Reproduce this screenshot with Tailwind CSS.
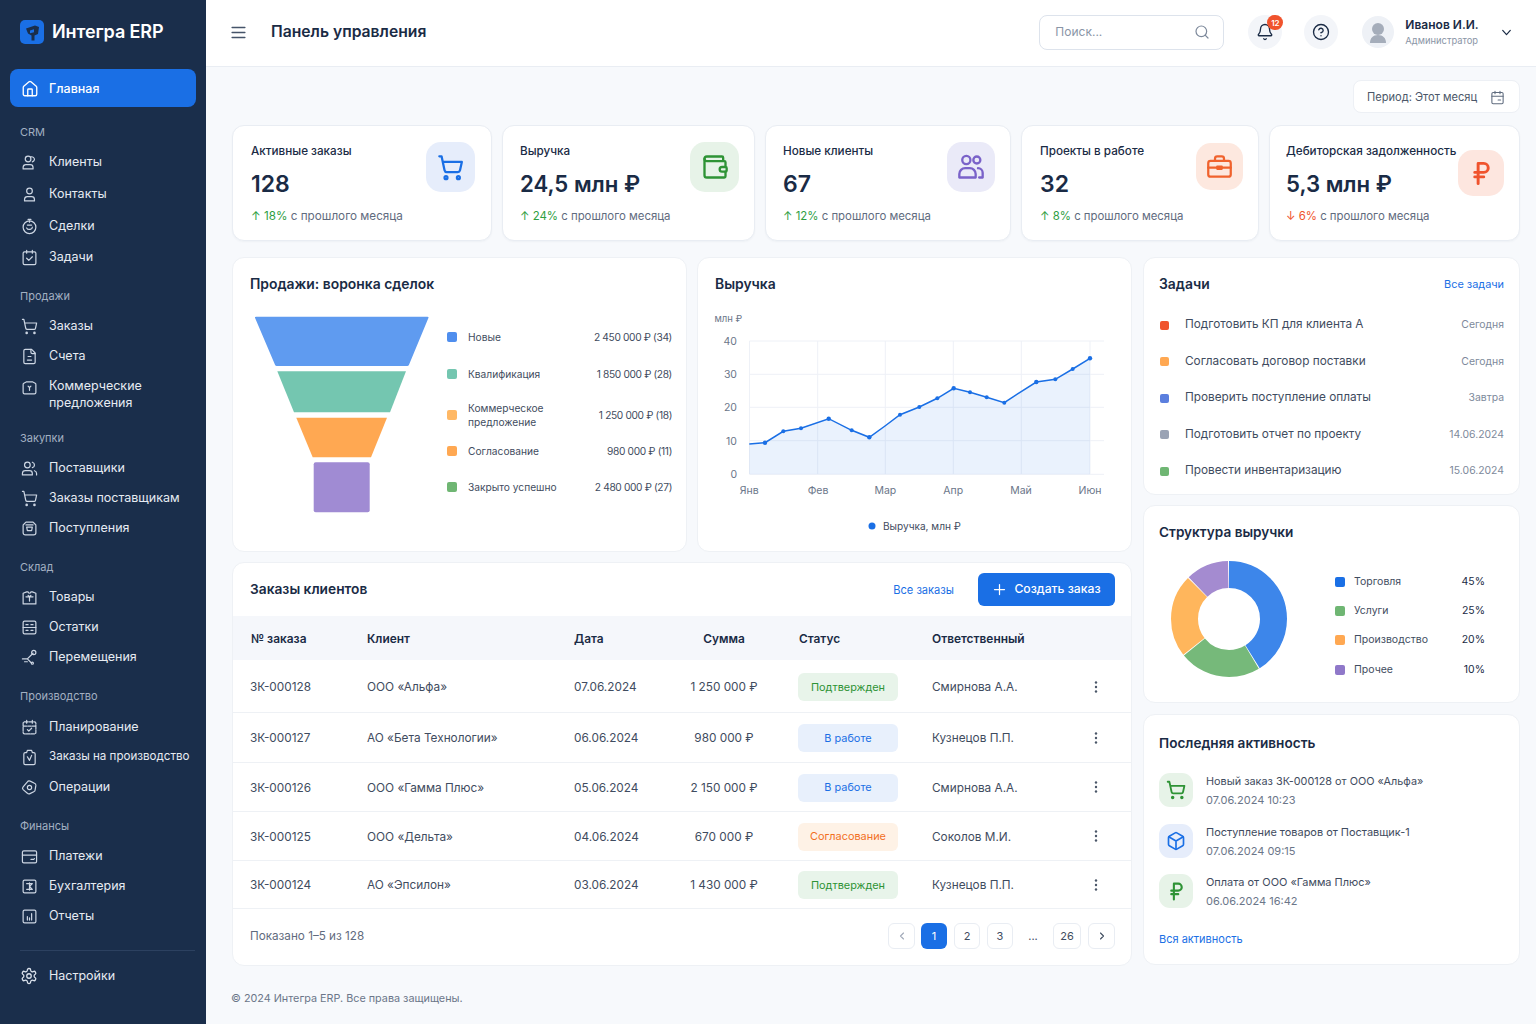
<!DOCTYPE html>
<html lang="ru">
<head>
  <meta charset="UTF-8" />
  <title>Интегра ERP</title>
  <script src="https://cdn.jsdelivr.net/npm/@tailwindcss/browser@4"></script>
</head>
<body class="bg-[#f7f9fc] text-[#1a2b45] font-['Inter','Noto_Sans',sans-serif]">
<div class="flex w-[1536px] h-[1024px] overflow-hidden">

  <!-- Sidebar -->
  <aside class="w-[206px] shrink-0 bg-[#1a2e4b] text-[#e6ebf2] text-[12.5px] whitespace-nowrap">
    <div class="h-[69px] flex items-start pl-[20px] pt-[20px] gap-[8px]">
      <svg class="w-[24px] h-[24px]" viewBox="0 0 24 24"><rect width="24" height="24" rx="5" fill="#1a6fe5"/><path d="M6 8.5l9-3 4 1.500-1 7-3.500 1.500v5h-3v-5l-3.500-2z" fill="#1a2e4b"/><path d="M10 10.5l4-1.200v3l-4 1z" fill="#1a6fe5"/></svg>
      <span class="text-[18px] leading-[24px] font-semibold text-white tracking-[-0.1px]">Интегра ERP</span>
    </div>

    <div class="mx-[10px] h-[38px] pt-[2px] rounded-lg bg-[#1a6fe5] flex items-center pl-[11px] gap-[10px] text-white font-medium">
      <svg class="w-[18px] h-[18px]" fill="none" stroke="currentColor" stroke-width="1.8" stroke-linecap="round" stroke-linejoin="round" viewBox="0 0 24 24"><path d="M15 21v-8a1 1 0 0 0-1-1h-4a1 1 0 0 0-1 1v8"/><path d="M3 10a2 2 0 0 1 .709-1.528l7-5.999a2 2 0 0 1 2.582 0l7 5.999A2 2 0 0 1 21 10v9a2 2 0 0 1-2 2H5a2 2 0 0 1-2-2z"/></svg>
      Главная
    </div>

    <!-- CRM -->
    <div class="mt-[17px] mb-[6px] h-4 pl-[20px] text-[11px] leading-4 text-[#a3b0c2]">CRM</div>
    <div class="h-[32px] flex items-center pl-[21px] gap-[11px]">
      <svg class="w-[17px] h-[17px] text-[#cdd6e3]" fill="none" stroke="currentColor" stroke-width="1.7" stroke-linecap="round" stroke-linejoin="round" viewBox="0 0 24 24"><path d="M17 21v-2a4 4 0 0 0-4-4H7a4 4 0 0 0-4 4v2h14"/><circle cx="10" cy="7" r="4"/><path d="M14 4a4 4 0 0 1 5 4 4 4 0 0 1-3 3"/></svg>
      Клиенты
    </div>
    <div class="h-[32px] flex items-center pl-[21px] gap-[11px]">
      <svg class="w-[17px] h-[17px] text-[#cdd6e3]" fill="none" stroke="currentColor" stroke-width="1.7" stroke-linecap="round" stroke-linejoin="round" viewBox="0 0 24 24"><path d="M19 21v-2a4 4 0 0 0-4-4H9a4 4 0 0 0-4 4v2z"/><circle cx="12" cy="7" r="4"/></svg>
      Контакты
    </div>
    <div class="h-[32px] flex items-center pl-[21px] gap-[11px]">
      <svg class="w-[17px] h-[17px] text-[#cdd6e3]" fill="none" stroke="currentColor" stroke-width="1.7" stroke-linecap="round" stroke-linejoin="round" viewBox="0 0 24 24"><circle cx="12" cy="13" r="9"/><path d="M10 2h4M12 4v2M8 14c1 2 3 2.5 5 2s3-2 3-3M9 10h6"/></svg>
      Сделки
    </div>
    <div class="h-[31px] flex items-center pl-[21px] gap-[11px]">
      <svg class="w-[17px] h-[17px] text-[#cdd6e3]" fill="none" stroke="currentColor" stroke-width="1.7" stroke-linecap="round" stroke-linejoin="round" viewBox="0 0 24 24"><rect x="3" y="4" width="18" height="18" rx="2"/><path d="M8 2v4M16 2v4M8 13l3 3 5-5"/></svg>
      Задачи
    </div>

    <!-- Продажи -->
    <div class="mt-[15px] mb-[7px] h-4 pl-[20px] text-[11px] leading-4 text-[#a3b0c2]">Продажи</div>
    <div class="h-[30px] flex items-center pl-[21px] gap-[11px]">
      <svg class="w-[17px] h-[17px] text-[#cdd6e3]" fill="none" stroke="currentColor" stroke-width="1.7" stroke-linecap="round" stroke-linejoin="round" viewBox="0 0 24 24"><circle cx="8" cy="21" r="1"/><circle cx="19" cy="21" r="1"/><path d="M2.05 2.05h2l2.66 12.42a2 2 0 0 0 2 1.58h9.78a2 2 0 0 0 1.95-1.57l1.65-7.43H5.12"/></svg>
      Заказы
    </div>
    <div class="h-[30px] flex items-center pl-[21px] gap-[11px]">
      <svg class="w-[17px] h-[17px] text-[#cdd6e3]" fill="none" stroke="currentColor" stroke-width="1.7" stroke-linecap="round" stroke-linejoin="round" viewBox="0 0 24 24"><path d="M15 2H6a2 2 0 0 0-2 2v16a2 2 0 0 0 2 2h12a2 2 0 0 0 2-2V7Z"/><path d="M14 2v4a2 2 0 0 0 2 2h4"/><path d="M10 12h4M9 17h6"/></svg>
      Счета
    </div>
    <div class="h-[47px] flex items-start pt-[6px] pl-[21px] gap-[11px] leading-[17px]">
      <svg class="w-[17px] h-[17px] mt-[2px] shrink-0 text-[#cdd6e3]" fill="none" stroke="currentColor" stroke-width="1.7" stroke-linecap="round" stroke-linejoin="round" viewBox="0 0 24 24"><path d="M8 4h8l4 2a2 2 0 0 1 1 2v11a2 2 0 0 1-2 2H5a2 2 0 0 1-2-2V8a2 2 0 0 1 1-2z"/><path d="M10 10l2 2 2-2M12 12v4"/></svg>
      <span>Коммерческие<br>предложения</span>
    </div>

    <!-- Закупки -->
    <div class="mt-[12px] mb-[7px] h-4 pl-[20px] text-[11px] leading-4 text-[#a3b0c2]">Закупки</div>
    <div class="h-[30px] flex items-center pl-[21px] gap-[11px]">
      <svg class="w-[17px] h-[17px] text-[#cdd6e3]" fill="none" stroke="currentColor" stroke-width="1.7" stroke-linecap="round" stroke-linejoin="round" viewBox="0 0 24 24"><path d="M16 21v-2a4 4 0 0 0-4-4H6a4 4 0 0 0-4 4v2z"/><circle cx="9" cy="7" r="4"/><path d="M22 21v-2a4 4 0 0 0-3-3.87M16 3.13a4 4 0 0 1 0 7.75"/></svg>
      Поставщики
    </div>
    <div class="h-[30px] flex items-center pl-[21px] gap-[11px]">
      <svg class="w-[17px] h-[17px] text-[#cdd6e3]" fill="none" stroke="currentColor" stroke-width="1.7" stroke-linecap="round" stroke-linejoin="round" viewBox="0 0 24 24"><circle cx="8" cy="21" r="1"/><circle cx="19" cy="21" r="1"/><path d="M2.05 2.05h2l2.66 12.42a2 2 0 0 0 2 1.58h9.78a2 2 0 0 0 1.95-1.57l1.65-7.43H5.12"/></svg>
      Заказы поставщикам
    </div>
    <div class="h-[30px] flex items-center pl-[21px] gap-[11px]">
      <svg class="w-[17px] h-[17px] text-[#cdd6e3]" fill="none" stroke="currentColor" stroke-width="1.7" stroke-linecap="round" stroke-linejoin="round" viewBox="0 0 24 24"><path d="M7 3h10l3 3a2 2 0 0 1 1 2v10a3 3 0 0 1-3 3H6a3 3 0 0 1-3-3V8a2 2 0 0 1 1-2z"/><path d="M8 10h8l-1 5H9zM7 7h10"/></svg>
      Поступления
    </div>

    <!-- Склад -->
    <div class="mt-[16px] mb-[7px] h-4 pl-[20px] text-[11px] leading-4 text-[#a3b0c2]">Склад</div>
    <div class="h-[30px] flex items-center pl-[21px] gap-[11px]">
      <svg class="w-[17px] h-[17px] text-[#cdd6e3]" fill="none" stroke="currentColor" stroke-width="1.7" stroke-linecap="round" stroke-linejoin="round" viewBox="0 0 24 24"><path d="M8 4h2a2 2 0 0 0 4 0h2l5 2v15H3V6z"/><path d="M7 11h10M12 11v6M10 9l2 2 2-2"/></svg>
      Товары
    </div>
    <div class="h-[30px] flex items-center pl-[21px] gap-[11px]">
      <svg class="w-[17px] h-[17px] text-[#cdd6e3]" fill="none" stroke="currentColor" stroke-width="1.7" stroke-linecap="round" stroke-linejoin="round" viewBox="0 0 24 24"><rect x="3" y="3" width="18" height="18" rx="2"/><path d="M3 12h18M7 8h3M14 8h3M7 16h3M14 16h3"/></svg>
      Остатки
    </div>
    <div class="h-[30px] flex items-center pl-[21px] gap-[11px]">
      <svg class="w-[17px] h-[17px] text-[#cdd6e3]" fill="none" stroke="currentColor" stroke-width="1.7" stroke-linecap="round" stroke-linejoin="round" viewBox="0 0 24 24"><path d="M2 14h7l8-8M9 14l5 5M5 18h4"/><circle cx="18" cy="5" r="3"/><circle cx="16" cy="20" r="1.5"/></svg>
      Перемещения
    </div>

    <!-- Производство -->
    <div class="mt-[16px] mb-[8px] h-4 pl-[20px] text-[11px] leading-4 text-[#a3b0c2]">Производство</div>
    <div class="h-[30px] flex items-center pl-[21px] gap-[11px]">
      <svg class="w-[17px] h-[17px] text-[#cdd6e3]" fill="none" stroke="currentColor" stroke-width="1.7" stroke-linecap="round" stroke-linejoin="round" viewBox="0 0 24 24"><path d="M8 2v4M16 2v4M5 4h14a2 2 0 0 1 2 2v13a2 2 0 0 1-2 2H5a2 2 0 0 1-2-2V6a2 2 0 0 1 2-2zM3 10h18M9 15l2 2 4-4" stroke-dasharray="5 1.5"/></svg>
      Планирование
    </div>
    <div class="h-[30px] flex items-center pl-[21px] gap-[11px] text-[11.6px]">
      <svg class="w-[17px] h-[17px] text-[#cdd6e3]" fill="none" stroke="currentColor" stroke-width="1.7" stroke-linecap="round" stroke-linejoin="round" viewBox="0 0 24 24"><path d="M9 2h6l1 3h2a2 2 0 0 1 2 2v13a2 2 0 0 1-2 2H6a2 2 0 0 1-2-2V7a2 2 0 0 1 2-2h2z"/><path d="M9 11l3 5 3-7"/></svg>
      Заказы на производство
    </div>
    <div class="h-[30px] flex items-center pl-[21px] gap-[11px]">
      <svg class="w-[17px] h-[17px] text-[#cdd6e3]" fill="none" stroke="currentColor" stroke-width="1.7" stroke-linecap="round" stroke-linejoin="round" viewBox="0 0 24 24"><path d="M13 3l6 3a3 3 0 0 1 2 3l-1 6a3 3 0 0 1-2 3l-6 3a3 3 0 0 1-3-1l-6-5a3 3 0 0 1 0-4l6-7a3 3 0 0 1 4-1z"/><circle cx="12" cy="12" r="3"/></svg>
      Операции
    </div>

    <!-- Финансы -->
    <div class="mt-[16px] mb-[7px] h-4 pl-[20px] text-[11px] leading-4 text-[#a3b0c2]">Финансы</div>
    <div class="h-[30px] flex items-center pl-[21px] gap-[11px]">
      <svg class="w-[17px] h-[17px] text-[#cdd6e3]" fill="none" stroke="currentColor" stroke-width="1.7" stroke-linecap="round" stroke-linejoin="round" viewBox="0 0 24 24"><rect x="2" y="4" width="20" height="17" rx="2"/><path d="M2 10h20M14 16h4l1-1"/></svg>
      Платежи
    </div>
    <div class="h-[30px] flex items-center pl-[21px] gap-[11px]">
      <svg class="w-[17px] h-[17px] text-[#cdd6e3]" fill="none" stroke="currentColor" stroke-width="1.7" stroke-linecap="round" stroke-linejoin="round" viewBox="0 0 24 24"><rect x="3" y="3" width="18" height="18" rx="2"/><path d="M8 8h8l-4 4 4 4H8M12 7v10"/></svg>
      Бухгалтерия
    </div>
    <div class="h-[30px] flex items-center pl-[21px] gap-[11px]">
      <svg class="w-[17px] h-[17px] text-[#cdd6e3]" fill="none" stroke="currentColor" stroke-width="1.7" stroke-linecap="round" stroke-linejoin="round" viewBox="0 0 24 24"><rect x="3" y="3" width="18" height="18" rx="2"/><path d="M9 17v-5M15 17V8M12 17v-3"/></svg>
      Отчеты
    </div>

    <div class="mt-[19px] ml-[20px] mr-[11px] h-px bg-[#2c4160]"></div>
    <div class="mt-[10px] h-[30px] flex items-center pl-[20px] gap-[11px]">
      <svg class="w-[18px] h-[18px] text-[#dbe2ec]" fill="none" stroke="currentColor" stroke-width="1.7" stroke-linecap="round" stroke-linejoin="round" viewBox="0 0 24 24"><path d="M12.22 2h-.44a2 2 0 0 0-2 2v.18a2 2 0 0 1-1 1.73l-.43.25a2 2 0 0 1-2 0l-.15-.08a2 2 0 0 0-2.73.73l-.22.38a2 2 0 0 0 .73 2.73l.15.1a2 2 0 0 1 1 1.72v.51a2 2 0 0 1-1 1.74l-.15.09a2 2 0 0 0-.73 2.73l.22.38a2 2 0 0 0 2.73.73l.15-.08a2 2 0 0 1 2 0l.43.25a2 2 0 0 1 1 1.73V20a2 2 0 0 0 2 2h.44a2 2 0 0 0 2-2v-.18a2 2 0 0 1 1-1.73l.43-.25a2 2 0 0 1 2 0l.15.08a2 2 0 0 0 2.73-.73l.22-.39a2 2 0 0 0-.73-2.73l-.15-.08a2 2 0 0 1-1-1.74v-.5a2 2 0 0 1 1-1.74l.15-.09a2 2 0 0 0 .73-2.73l-.22-.38a2 2 0 0 0-2.73-.73l-.15.08a2 2 0 0 1-2 0l-.43-.25a2 2 0 0 1-1-1.73V4a2 2 0 0 0-2-2z"/><circle cx="12" cy="12" r="3"/></svg>
      Настройки
    </div>
  </aside>

  <div class="flex-1 min-w-0">
    <!-- Top bar -->
    <header class="h-[67px] pb-[2px] bg-white border-b border-[#e9edf3] flex items-center">
      <svg class="ml-[24px] w-[17px] h-[17px] text-[#46546a]" fill="none" stroke="currentColor" stroke-width="2" stroke-linecap="round" viewBox="0 0 24 24"><path d="M3 5h18M3 12h18M3 19h18"/></svg>
      <h1 class="ml-[24px] text-[15.7px] font-semibold text-[#1a2b45]">Панель управления</h1>

      <div class="ml-[613px] w-[185px] h-[35px] border border-[#dde3ec] rounded-lg flex items-center justify-between pl-[15px] pr-[13px] text-[12px] text-[#8a95a6]">
        Поиск...
        <svg class="w-[16px] h-[16px] text-[#7d899b]" fill="none" stroke="currentColor" stroke-width="1.8" stroke-linecap="round" viewBox="0 0 24 24"><circle cx="11" cy="11" r="8"/><path d="m21 21-4.3-4.3"/></svg>
      </div>

      <div class="relative ml-[24px] w-[34px] h-[34px] rounded-full bg-[#f3f5f9] flex items-center justify-center">
        <svg class="w-[18px] h-[18px] text-[#1a2b45]" fill="none" stroke="currentColor" stroke-width="1.8" stroke-linecap="round" stroke-linejoin="round" viewBox="0 0 24 24"><path d="M10.268 21a2 2 0 0 0 3.464 0"/><path d="M3.262 15.326A1 1 0 0 0 4 17h16a1 1 0 0 0 .74-1.673C19.41 13.956 18 12.499 18 8A6 6 0 0 0 6 8c0 4.499-1.411 5.956-2.738 7.326"/></svg>
        <span class="absolute top-0 left-[19px] w-[16px] h-[15px] rounded-full bg-[#f0532d] text-white text-[8px] font-semibold flex items-center justify-center">12</span>
      </div>
      <div class="ml-[22px] w-[34px] h-[34px] rounded-full bg-[#f3f5f9] flex items-center justify-center">
        <svg class="w-[18px] h-[18px] text-[#1a2b45]" fill="none" stroke="currentColor" stroke-width="1.8" stroke-linecap="round" stroke-linejoin="round" viewBox="0 0 24 24"><circle cx="12" cy="12" r="10"/><path d="M9.09 9a3 3 0 0 1 5.83 1c0 2-3 3-3 3M12 17h.01"/></svg>
      </div>

      <div class="ml-[24px] w-[32px] h-[32px] rounded-full bg-[#eef1f6] overflow-hidden flex items-center justify-center">
        <svg class="w-[32px] h-[32px]" viewBox="0 0 32 32"><circle cx="16" cy="13" r="6" fill="#a5adba"/><path d="M8 27c0-5 3-8 8-8s8 3 8 8z" fill="#a5adba"/></svg>
      </div>
      <div class="ml-[11px] w-[95px]">
        <div class="text-[12px] leading-[16px] font-semibold text-[#1a2b45]">Иванов И.И.</div>
        <div class="mt-[2px] text-[9.4px] leading-[12px] text-[#8a95a6]">Администратор</div>
      </div>
      <svg class="w-[13px] h-[13px] text-[#1a2b45]" fill="none" stroke="currentColor" stroke-width="2.2" stroke-linecap="round" stroke-linejoin="round" viewBox="0 0 24 24"><path d="m5 8 7 8 7-8"/></svg>
    </header>

    <main class="pl-[26px] pr-[16px]">
      <!-- Period -->
      <div class="pt-[13px] flex justify-end">
        <div class="w-[167px] h-[33px] pt-px bg-white border border-[#edf0f5] rounded-lg flex items-center justify-between pl-[13px] pr-[14px] text-[11.1px] text-[#4b5769]">
          Период: Этот месяц
          <svg class="w-[15px] h-[15px] text-[#5f6b7e]" fill="none" stroke="currentColor" stroke-width="1.7" stroke-linecap="round" stroke-linejoin="round" viewBox="0 0 24 24"><rect x="3" y="4" width="18" height="18" rx="2"/><path d="M8 2v4M16 2v4M3 10h18M13 16h4"/></svg>
        </div>
      </div>

      <!-- KPI cards -->
      <div class="mt-[12px] flex gap-[10px] h-[116px]">
        <div class="w-[260px] shrink-0 bg-white border border-[#e9edf3] rounded-xl shadow-[0_1px_2px_rgba(26,43,69,0.04)] flex justify-between pl-[18px] pr-[16px] pt-[16px]">
          <div class="mt-px">
            <div class="text-[11.7px] leading-4 font-medium text-[#1a2b45]">Активные заказы</div>
            <div class="mt-[9px] text-[23px] leading-8 font-semibold">128</div>
            <div class="mt-[8px] text-[11.7px] leading-4 text-[#5f6b7e]"><span class="text-[#2e9e3f]">↑ 18%</span> с прошлого месяца</div>
          </div>
          <div class="w-[49px] h-[50px] rounded-[15px] bg-[#e6edfb] flex items-center justify-center">
            <svg class="w-[27px] h-[27px] text-[#1a6fe5]" fill="none" stroke="currentColor" stroke-width="2" stroke-linecap="round" stroke-linejoin="round" viewBox="0 0 24 24"><circle cx="8" cy="21" r="1.3"/><circle cx="19" cy="21" r="1.3"/><path d="M2.05 2.05h2l2.66 12.42a2 2 0 0 0 2 1.58h9.78a2 2 0 0 0 1.95-1.57l1.65-7.43H5.12"/></svg>
          </div>
        </div>
        <div class="w-[253px] shrink-0 bg-white border border-[#e9edf3] rounded-xl shadow-[0_1px_2px_rgba(26,43,69,0.04)] flex justify-between pl-[17px] pr-[15px] pt-[16px]">
          <div class="mt-px">
            <div class="text-[11.7px] leading-4 font-medium text-[#1a2b45]">Выручка</div>
            <div class="mt-[9px] text-[22.2px] leading-8 font-semibold">24,5 млн ₽</div>
            <div class="mt-[8px] text-[11.4px] leading-4 text-[#5f6b7e]"><span class="text-[#2e9e3f]">↑ 24%</span> с прошлого месяца</div>
          </div>
          <div class="w-[49px] h-[50px] rounded-[15px] bg-[#e7f3e8] flex items-center justify-center">
            <svg class="w-[28px] h-[28px] text-[#2e9335]" fill="none" stroke="currentColor" stroke-width="2" stroke-linecap="round" stroke-linejoin="round" viewBox="0 0 24 24"><path d="M19 7V4a1 1 0 0 0-1-1H5a2 2 0 0 0 0 4h15a1 1 0 0 1 1 1v4h-3a2 2 0 0 0 0 4h3a1 1 0 0 0 1-1v-2a1 1 0 0 0-1-1"/><path d="M3 5v14a2 2 0 0 0 2 2h15a1 1 0 0 0 1-1v-4"/></svg>
          </div>
        </div>
        <div class="w-[246px] shrink-0 bg-white border border-[#e9edf3] rounded-xl shadow-[0_1px_2px_rgba(26,43,69,0.04)] flex justify-between pl-[17px] pr-[15px] pt-[16px]">
          <div class="mt-px">
            <div class="text-[11.7px] leading-4 font-medium text-[#1a2b45]">Новые клиенты</div>
            <div class="mt-[9px] text-[23px] leading-8 font-semibold">67</div>
            <div class="mt-[8px] text-[11.4px] leading-4 text-[#5f6b7e]"><span class="text-[#2e9e3f]">↑ 12%</span> с прошлого месяца</div>
          </div>
          <div class="w-[48px] h-[50px] rounded-[15px] bg-[#eaeaf8] flex items-center justify-center">
            <svg class="w-[28px] h-[28px] text-[#7a62c9]" fill="none" stroke="currentColor" stroke-width="2" stroke-linecap="round" stroke-linejoin="round" viewBox="0 0 24 24"><path d="M2 21v-3a5 5 0 0 1 5-5h4a5 5 0 0 1 5 5v3z"/><circle cx="8" cy="6" r="3.5"/><circle cx="17" cy="6" r="3"/><path d="M18 13a4 4 0 0 1 4 4v4h-3"/></svg>
          </div>
        </div>
        <div class="w-[238px] shrink-0 bg-white border border-[#e9edf3] rounded-xl shadow-[0_1px_2px_rgba(26,43,69,0.04)] flex justify-between pl-[18px] pr-[15px] pt-[16px]">
          <div class="mt-px">
            <div class="text-[11.7px] leading-4 font-medium text-[#1a2b45]">Проекты в работе</div>
            <div class="mt-[9px] text-[23px] leading-8 font-semibold">32</div>
            <div class="mt-[8px] text-[11.4px] leading-4 text-[#5f6b7e]"><span class="text-[#2e9e3f]">↑ 8%</span> с прошлого месяца</div>
          </div>
          <div class="mt-[1px] w-[47px] h-[47px] rounded-[15px] bg-[#fde8df] flex items-center justify-center">
            <svg class="w-[27px] h-[27px] text-[#f0622d]" fill="none" stroke="currentColor" stroke-width="2" stroke-linecap="round" stroke-linejoin="round" viewBox="0 0 24 24"><rect x="2" y="7" width="20" height="14" rx="2"/><path d="M8 7V5a2 2 0 0 1 2-2h4a2 2 0 0 1 2 2v2M2 13h8M14 13h8M10 12h4v2h-4z"/></svg>
          </div>
        </div>
        <div class="w-[251px] shrink-0 bg-white border border-[#e9edf3] rounded-xl shadow-[0_1px_2px_rgba(26,43,69,0.04)] flex justify-between pl-[16px] pr-[15px] pt-[16px]">
          <div class="mt-px whitespace-nowrap">
            <div class="text-[11.7px] leading-4 font-medium text-[#1a2b45]">Дебиторская задолженность</div>
            <div class="mt-[9px] text-[22.2px] leading-8 font-semibold">5,3 млн ₽</div>
            <div class="mt-[8px] text-[11.4px] leading-4 text-[#5f6b7e]"><span class="text-[#f0532d]">↓ 6%</span> с прошлого месяца</div>
          </div>
          <div class="mt-[8px] w-[46px] h-[46px] shrink-0 rounded-[15px] bg-[#fde6df] flex items-center justify-center">
            <svg class="w-[27px] h-[27px] text-[#f0532d]" fill="none" stroke="currentColor" stroke-width="2.6" stroke-linecap="round" stroke-linejoin="round" viewBox="0 0 24 24"><path d="M6 11h8a4 4 0 0 0 0-8H9v18M6 15h8"/></svg>
          </div>
        </div>
      </div>

      <div class="mt-[16px] flex gap-[11px]">
        <!-- Left column -->
        <div class="w-[900px] shrink-0">
          <div class="flex gap-[10px]">
            <!-- Funnel -->
            <section class="w-[455px] h-[295px] bg-white border border-[#eef1f5] rounded-xl pl-[17px] pr-[14px] pt-[16px]">
              <h2 class="text-[13.9px] leading-5 font-semibold">Продажи: воронка сделок</h2>
              <div class="mt-[22px] flex">
                <svg class="ml-[5px] w-[174px] h-[197px] shrink-0" viewBox="255 316 174 197">
                  <path d="M256 316.7H427.5a1 1 0 0 1 .8 1.5L409 364.8a2 2 0 0 1-2 1.2H277a2 2 0 0 1-2-1.2L255.2 318.2a1 1 0 0 1 .8-1.5z" fill="#5f9bf0"/>
                  <path d="M277.3 371.3H406L390 412.3H294z" fill="#74c6b0"/>
                  <path d="M296.3 417.7H387L371 457.3H312.7z" fill="#ffa852"/>
                  <rect x="313.7" y="462.3" width="56" height="50" rx="2" fill="#a08bd3"/>
                </svg>
                <div class="ml-[18px] flex-1 text-[10.2px] leading-[14.5px] text-[#3f4c60]">
                  <div class="h-[42px] flex items-center"><span class="w-[10px] h-[10px] rounded-[2px] bg-[#4f8eee] mr-[11px]"></span><span>Новые</span><span class="ml-auto tracking-[-0.35px]">2 450 000 ₽ (34)</span></div>
                  <div class="h-[32px] flex items-center"><span class="w-[10px] h-[10px] rounded-[2px] bg-[#74c6b0] mr-[11px]"></span><span>Квалификация</span><span class="ml-auto tracking-[-0.35px]">1 850 000 ₽ (28)</span></div>
                  <div class="h-[50px] flex items-center"><span class="w-[10px] h-[10px] rounded-[2px] bg-[#ffb865] mr-[11px]"></span><span>Коммерческое<br>предложение</span><span class="ml-auto tracking-[-0.35px]">1 250 000 ₽ (18)</span></div>
                  <div class="h-[22px] flex items-center"><span class="w-[10px] h-[10px] rounded-[2px] bg-[#ffa852] mr-[11px]"></span><span>Согласование</span><span class="ml-auto tracking-[-0.35px]">980 000 ₽ (11)</span></div>
                  <div class="h-[50px] flex items-center"><span class="w-[10px] h-[10px] rounded-[2px] bg-[#6fb673] mr-[11px]"></span><span>Закрыто успешно</span><span class="ml-auto tracking-[-0.35px]">2 480 000 ₽ (27)</span></div>
                </div>
              </div>
            </section>

            <!-- Revenue chart -->
            <section class="w-[435px] h-[295px] bg-white border border-[#eef1f5] rounded-xl pt-[16px]">
              <h2 class="ml-[17px] text-[13.9px] leading-5 font-semibold">Выручка</h2>
              <svg class="w-[433px] h-[240px] mt-[6px]" viewBox="698 300 433 240">
                <g stroke="#eef1f7" stroke-width="1">
                  <path d="M749.5 341H1104M749.5 374.3H1104M749.5 407.3H1104M749.5 440.7H1104M749.5 474.3H1104"/>
                  <path d="M749.5 341V474M817.7 341V474M885.3 341V474M953.3 341V474M1021.3 341V474M1090 341V474"/>
                </g>
                <path d="M749.3 444L765 442.7 783.3 431.3 801 428.3 828.7 418.7 851.7 430.3 869.3 437.3 885 426 900 414.7 919.3 407 937.3 398.3 953.7 388.3 970 392.3 986.7 397.3 1004.3 402.7 1020 392.3 1036.3 382 1055.3 379.3 1072.7 369 1090 358.3V474.3H749.3z" fill="#1a6fe5" fill-opacity=".09"/>
                <path d="M749.3 444L765 442.7 783.3 431.3 801 428.3 828.7 418.7 851.7 430.3 869.3 437.3 885 426 900 414.7 919.3 407 937.3 398.3 953.7 388.3 970 392.3 986.7 397.3 1004.3 402.7 1020 392.3 1036.3 382 1055.3 379.3 1072.7 369 1090 358.3" fill="none" stroke="#1a6fe5" stroke-width="1.5"/>
                <g fill="#1a6fe5">
                  <circle cx="765" cy="442.7" r="2.2"/><circle cx="783.3" cy="431.3" r="2"/><circle cx="801" cy="428.3" r="2"/><circle cx="828.7" cy="418.7" r="2.2"/><circle cx="851.7" cy="430.3" r="2"/><circle cx="869.3" cy="437.3" r="2.2"/><circle cx="900" cy="414.7" r="2"/><circle cx="919.3" cy="407" r="2"/><circle cx="937.3" cy="398.3" r="2"/><circle cx="953.7" cy="388.3" r="2.2"/><circle cx="970" cy="392.3" r="2"/><circle cx="986.7" cy="397.3" r="2"/><circle cx="1004.3" cy="402.7" r="2"/><circle cx="1036.3" cy="382" r="2.2"/><circle cx="1055.3" cy="379.3" r="2"/><circle cx="1072.7" cy="369" r="2"/><circle cx="1090" cy="358.3" r="2.2"/>
                </g>
                <g font-size="10.5" fill="#6b7689" font-family="Inter">
                  <text x="714.5" y="322" font-size="9.5">млн ₽</text>
                  <text x="737" y="345" text-anchor="end">40</text>
                  <text x="737" y="378" text-anchor="end">30</text>
                  <text x="737" y="411" text-anchor="end">20</text>
                  <text x="737" y="444.5" text-anchor="end">10</text>
                  <text x="737" y="478" text-anchor="end">0</text>
                  <text x="749.3" y="494" text-anchor="middle">Янв</text>
                  <text x="818" y="494" text-anchor="middle">Фев</text>
                  <text x="885.3" y="494" text-anchor="middle">Мар</text>
                  <text x="953.3" y="494" text-anchor="middle">Апр</text>
                  <text x="1021" y="494" text-anchor="middle">Май</text>
                  <text x="1090" y="494" text-anchor="middle">Июн</text>
                </g>
                <circle cx="872" cy="526" r="3.5" fill="#1a6fe5"/>
                <text x="883" y="530" font-size="10.1" fill="#3f4c60" font-family="Inter">Выручка, млн ₽</text>
              </svg>
            </section>
          </div>

          <!-- Orders table -->
          <section class="mt-[10px] h-[404px] bg-white border border-[#eef1f5] rounded-xl overflow-hidden">
            <div class="h-[53px] flex items-center pl-[17px] pr-[16px]">
              <h2 class="text-[13.75px] font-semibold">Заказы клиентов</h2>
              <span class="ml-auto text-[11.1px] text-[#1a6fe5] pt-px">Все заказы</span>
              <button class="ml-[24px] w-[137px] h-[33px] rounded-md bg-[#1a6fe5] text-white text-[12.2px] font-medium flex items-center justify-center gap-[7px]">
                <svg class="w-[15px] h-[15px]" fill="none" stroke="currentColor" stroke-width="2" stroke-linecap="round" viewBox="0 0 24 24"><path d="M4 12h16M12 4v16"/></svg>
                Создать заказ
              </button>
            </div>
            <table class="w-full table-fixed text-[11.8px] text-[#3f4c60] border-collapse">
              <colgroup><col class="w-[134px]"><col class="w-[207px]"><col class="w-[106px]"><col class="w-[88px]"><col class="w-[164px]"><col class="w-[148px]"><col></colgroup>
              <thead class="bg-[#f5f7fb] text-[#1a2b45] text-[11.9px] font-semibold text-left">
                <tr class="h-[44px] [&>th]:pt-[2px]">
                  <th class="font-semibold pl-[18px]">№ заказа</th><th class="font-semibold">Клиент</th><th class="font-semibold">Дата</th><th class="font-semibold text-center">Сумма</th><th class="font-semibold pl-[31px]">Статус</th><th class="font-semibold">Ответственный</th><th></th>
                </tr>
              </thead>
              <tbody class="[&_td]:pt-[4px]">
                <tr class="h-[52px] border-b border-[#eef1f5]">
                  <td class="pl-[17px]">ЗК-000128</td><td>ООО «Альфа»</td><td>07.06.2024</td><td class="text-center whitespace-nowrap">1 250 000 ₽</td>
                  <td class="pl-[30px] pt-[2px]!"><span class="flex items-center justify-center w-[100px] h-[28px] rounded-md bg-[#e8f4ea] text-[#2e9335] text-[10.9px]">Подтвержден</span></td>
                  <td>Смирнова А.А.</td>
                  <td class="text-center pr-[19px] pt-[2px]! text-[#4b5769]"><svg class="inline w-[14px] h-[14px]" fill="currentColor" viewBox="0 0 14 14"><circle cx="7" cy="2.5" r="1.2"/><circle cx="7" cy="7" r="1.2"/><circle cx="7" cy="11.5" r="1.2"/></svg></td>
                </tr>
                <tr class="h-[50px] border-b border-[#eef1f5]">
                  <td class="pl-[17px]">ЗК-000127</td><td>АО «Бета Технологии»</td><td>06.06.2024</td><td class="text-center whitespace-nowrap">980 000 ₽</td>
                  <td class="pl-[30px] pt-[2px]!"><span class="flex items-center justify-center w-[100px] h-[28px] rounded-md bg-[#e8f0fc] text-[#1a6fe5] text-[10.9px]">В работе</span></td>
                  <td>Кузнецов П.П.</td>
                  <td class="text-center pr-[19px] pt-[2px]! text-[#4b5769]"><svg class="inline w-[14px] h-[14px]" fill="currentColor" viewBox="0 0 14 14"><circle cx="7" cy="2.5" r="1.2"/><circle cx="7" cy="7" r="1.2"/><circle cx="7" cy="11.5" r="1.2"/></svg></td>
                </tr>
                <tr class="h-[49px] border-b border-[#eef1f5]">
                  <td class="pl-[17px]">ЗК-000126</td><td>ООО «Гамма Плюс»</td><td>05.06.2024</td><td class="text-center whitespace-nowrap">2 150 000 ₽</td>
                  <td class="pl-[30px] pt-[2px]!"><span class="flex items-center justify-center w-[100px] h-[28px] rounded-md bg-[#e8f0fc] text-[#1a6fe5] text-[10.9px]">В работе</span></td>
                  <td>Смирнова А.А.</td>
                  <td class="text-center pr-[19px] pt-[2px]! text-[#4b5769]"><svg class="inline w-[14px] h-[14px]" fill="currentColor" viewBox="0 0 14 14"><circle cx="7" cy="2.5" r="1.2"/><circle cx="7" cy="7" r="1.2"/><circle cx="7" cy="11.5" r="1.2"/></svg></td>
                </tr>
                <tr class="h-[49px] border-b border-[#eef1f5]">
                  <td class="pl-[17px]">ЗК-000125</td><td>ООО «Дельта»</td><td>04.06.2024</td><td class="text-center whitespace-nowrap">670 000 ₽</td>
                  <td class="pl-[30px] pt-[2px]!"><span class="flex items-center justify-center w-[100px] h-[28px] rounded-md bg-[#fef2e6] text-[#f2701f] text-[10.9px]">Согласование</span></td>
                  <td>Соколов М.И.</td>
                  <td class="text-center pr-[19px] pt-[2px]! text-[#4b5769]"><svg class="inline w-[14px] h-[14px]" fill="currentColor" viewBox="0 0 14 14"><circle cx="7" cy="2.5" r="1.2"/><circle cx="7" cy="7" r="1.2"/><circle cx="7" cy="11.5" r="1.2"/></svg></td>
                </tr>
                <tr class="h-[48px] border-b border-[#eef1f5]">
                  <td class="pl-[17px]">ЗК-000124</td><td>АО «Эпсилон»</td><td>03.06.2024</td><td class="text-center whitespace-nowrap">1 430 000 ₽</td>
                  <td class="pl-[30px] pt-[2px]!"><span class="flex items-center justify-center w-[100px] h-[28px] rounded-md bg-[#e8f4ea] text-[#2e9335] text-[10.9px]">Подтвержден</span></td>
                  <td>Кузнецов П.П.</td>
                  <td class="text-center pr-[19px] pt-[2px]! text-[#4b5769]"><svg class="inline w-[14px] h-[14px]" fill="currentColor" viewBox="0 0 14 14"><circle cx="7" cy="2.5" r="1.2"/><circle cx="7" cy="7" r="1.2"/><circle cx="7" cy="11.5" r="1.2"/></svg></td>
                </tr>
              </tbody>
            </table>
            <div class="h-[55px] flex items-center pl-[17px] pr-[16px] text-[11.7px] text-[#5f6b7e]">
              <span class="mt-[2px]">Показано 1–5 из 128</span>
              <div class="ml-auto flex items-center text-[11px] text-[#3f4c60]">
                <span class="w-[27px] h-[26px] border border-[#e9edf3] rounded-md flex items-center justify-center text-[#a0a9b8]"><svg class="w-[12px] h-[12px]" fill="none" stroke="currentColor" stroke-width="2.2" stroke-linecap="round" stroke-linejoin="round" viewBox="0 0 24 24"><path d="m15 18-6-6 6-6"/></svg></span>
                <span class="ml-[6px] w-[26px] h-[26px] rounded-md bg-[#1a6fe5] text-white flex items-center justify-center">1</span>
                <span class="ml-[7px] w-[26px] h-[26px] border border-[#e9edf3] rounded-md flex items-center justify-center">2</span>
                <span class="ml-[7px] w-[26px] h-[26px] border border-[#e9edf3] rounded-md flex items-center justify-center">3</span>
                <span class="w-[40px] text-center">...</span>
                <span class="w-[28px] h-[26px] border border-[#e9edf3] rounded-md flex items-center justify-center">26</span>
                <span class="ml-[7px] w-[27px] h-[26px] border border-[#e9edf3] rounded-md flex items-center justify-center"><svg class="w-[12px] h-[12px]" fill="none" stroke="currentColor" stroke-width="2.2" stroke-linecap="round" stroke-linejoin="round" viewBox="0 0 24 24"><path d="m9 18 6-6-6-6"/></svg></span>
              </div>
            </div>
          </section>
        </div>

        <!-- Right column -->
        <div class="w-[377px] shrink-0">
          <!-- Tasks -->
          <section class="h-[238px] bg-white border border-[#eef1f5] rounded-xl pl-[15px] pr-[15px] pt-[16px]">
            <div class="flex items-center justify-between h-5">
              <h2 class="text-[13.9px] font-semibold">Задачи</h2>
              <span class="text-[10.9px] text-[#1a6fe5]">Все задачи</span>
            </div>
            <ul class="mt-[13px] text-[11.8px] text-[#3f4c60]">
              <li class="h-[36.5px] flex items-center"><span class="w-[9px] h-[9px] rounded-[2px] bg-[#f0532d] mr-[16px] ml-px"></span>Подготовить КП для клиента А<span class="ml-auto text-[10.4px] text-[#7d899b]">Сегодня</span></li>
              <li class="h-[36.5px] flex items-center"><span class="w-[9px] h-[9px] rounded-[2px] bg-[#ffa852] mr-[16px] ml-px"></span>Согласовать договор поставки<span class="ml-auto text-[10.4px] text-[#7d899b]">Сегодня</span></li>
              <li class="h-[36.5px] flex items-center"><span class="w-[9px] h-[9px] rounded-[2px] bg-[#5b7fde] mr-[16px] ml-px"></span>Проверить поступление оплаты<span class="ml-auto text-[10.4px] text-[#7d899b]">Завтра</span></li>
              <li class="h-[36.5px] flex items-center"><span class="w-[9px] h-[9px] rounded-[2px] bg-[#9aa3b4] mr-[16px] ml-px"></span>Подготовить отчет по проекту<span class="ml-auto text-[10.4px] text-[#7d899b]">14.06.2024</span></li>
              <li class="h-[36.5px] flex items-center"><span class="w-[9px] h-[9px] rounded-[2px] bg-[#6fb673] mr-[16px] ml-px"></span>Провести инвентаризацию<span class="ml-auto text-[10.4px] text-[#7d899b]">15.06.2024</span></li>
            </ul>
          </section>

          <!-- Revenue structure -->
          <section class="mt-[10px] h-[198px] bg-white border border-[#eef1f5] rounded-xl pl-[15px] pr-[34px] pt-[16px]">
            <h2 class="text-[13.6px] leading-5 font-semibold">Структура выручки</h2>
            <div class="flex">
              <svg class="ml-[11px] mt-[18px] w-[118px] h-[118px] shrink-0 -rotate-90" viewBox="0 0 118 118" fill="none" stroke-width="27">
                <circle cx="59" cy="59" r="44.5" pathLength="360" stroke="#3d86ea" stroke-dasharray="148 212"/>
                <circle cx="59" cy="59" r="44.5" pathLength="360" stroke="#76b97a" stroke-dasharray="82 278" stroke-dashoffset="-149"/>
                <circle cx="59" cy="59" r="44.5" pathLength="360" stroke="#ffb65c" stroke-dasharray="83 277" stroke-dashoffset="-232"/>
                <circle cx="59" cy="59" r="44.5" pathLength="360" stroke="#a48bd0" stroke-dasharray="43 317" stroke-dashoffset="-316"/>
              </svg>
              <div class="ml-[47px] flex-1 mt-[25px] text-[10.5px] text-[#3f4c60]">
                <div class="h-[29.3px] flex items-center"><span class="w-[10px] h-[10px] rounded-[2px] bg-[#1a6fe5] mr-[9px]"></span>Торговля<span class="ml-auto text-[#1a2b45]">45%</span></div>
                <div class="h-[29.3px] flex items-center"><span class="w-[10px] h-[10px] rounded-[2px] bg-[#6fb673] mr-[9px]"></span>Услуги<span class="ml-auto text-[#1a2b45]">25%</span></div>
                <div class="h-[29.3px] flex items-center"><span class="w-[10px] h-[10px] rounded-[2px] bg-[#ffa852] mr-[9px]"></span>Производство<span class="ml-auto text-[#1a2b45]">20%</span></div>
                <div class="h-[29.3px] flex items-center"><span class="w-[10px] h-[10px] rounded-[2px] bg-[#8f78c9] mr-[9px]"></span>Прочее<span class="ml-auto text-[#1a2b45]">10%</span></div>
              </div>
            </div>
          </section>

          <!-- Activity -->
          <section class="mt-[11px] h-[251px] bg-white border border-[#eef1f5] rounded-xl pl-[15px] pt-[18px]">
            <h2 class="text-[13.6px] leading-5 font-semibold">Последняя активность</h2>
            <div class="mt-[20px] h-[34px] flex items-center gap-[13px]">
              <div class="w-[34px] h-[34px] rounded-[11px] bg-[#e7f3e8] flex items-center justify-center">
                <svg class="w-[20px] h-[20px] text-[#2e9335]" fill="none" stroke="currentColor" stroke-width="2.2" stroke-linecap="round" stroke-linejoin="round" viewBox="0 0 24 24"><circle cx="8" cy="21" r="1"/><circle cx="19" cy="21" r="1"/><path d="M2.05 2.05h2l2.66 12.42a2 2 0 0 0 2 1.58h9.78a2 2 0 0 0 1.95-1.57l1.65-7.43H5.12"/></svg>
              </div>
              <div class="pt-[2px] text-[10.85px] leading-[19px] text-[#3f4c60]">Новый заказ ЗК-000128 от ООО «Альфа»<div class="text-[11px] text-[#6b7689]">07.06.2024 10:23</div></div>
            </div>
            <div class="mt-[16.5px] h-[34px] flex items-center gap-[13px]">
              <div class="w-[34px] h-[34px] rounded-[11px] bg-[#e6edfb] flex items-center justify-center">
                <svg class="w-[20px] h-[20px] text-[#1a6fe5]" fill="none" stroke="currentColor" stroke-width="2" stroke-linecap="round" stroke-linejoin="round" viewBox="0 0 24 24"><path d="M21 8a2 2 0 0 0-1-1.73l-7-4a2 2 0 0 0-2 0l-7 4A2 2 0 0 0 3 8v8a2 2 0 0 0 1 1.73l7 4a2 2 0 0 0 2 0l7-4A2 2 0 0 0 21 16Z"/><path d="M12 22V12M3.3 7 12 12l8.7-5"/></svg>
              </div>
              <div class="pt-[2px] text-[10.95px] leading-[19px] text-[#3f4c60]">Поступление товаров от Поставщик-1<div class="text-[11px] text-[#6b7689]">07.06.2024 09:15</div></div>
            </div>
            <div class="mt-[16.5px] h-[34px] flex items-center gap-[13px]">
              <div class="w-[34px] h-[34px] rounded-[11px] bg-[#e7f3e8] flex items-center justify-center">
                <svg class="w-[21px] h-[21px] text-[#2e9335]" fill="none" stroke="currentColor" stroke-width="2.4" stroke-linecap="round" stroke-linejoin="round" viewBox="0 0 24 24"><path d="M6 11h8a4 4 0 0 0 0-8H9v18M6 15h8"/></svg>
              </div>
              <div class="pt-[2px] text-[10.95px] leading-[19px] text-[#3f4c60]">Оплата от ООО «Гамма Плюс»<div class="text-[11px] text-[#6b7689]">06.06.2024 16:42</div></div>
            </div>
            <div class="mt-[23px] text-[11px] leading-4 text-[#1a6fe5]">Вся активность</div>
          </section>
        </div>
      </div>

      <footer class="mt-[25px] -ml-px text-[10.8px] leading-4 text-[#6b7689]">© 2024 Интегра ERP. Все права защищены.</footer>
    </main>
  </div>
</div>
</body>
</html>
